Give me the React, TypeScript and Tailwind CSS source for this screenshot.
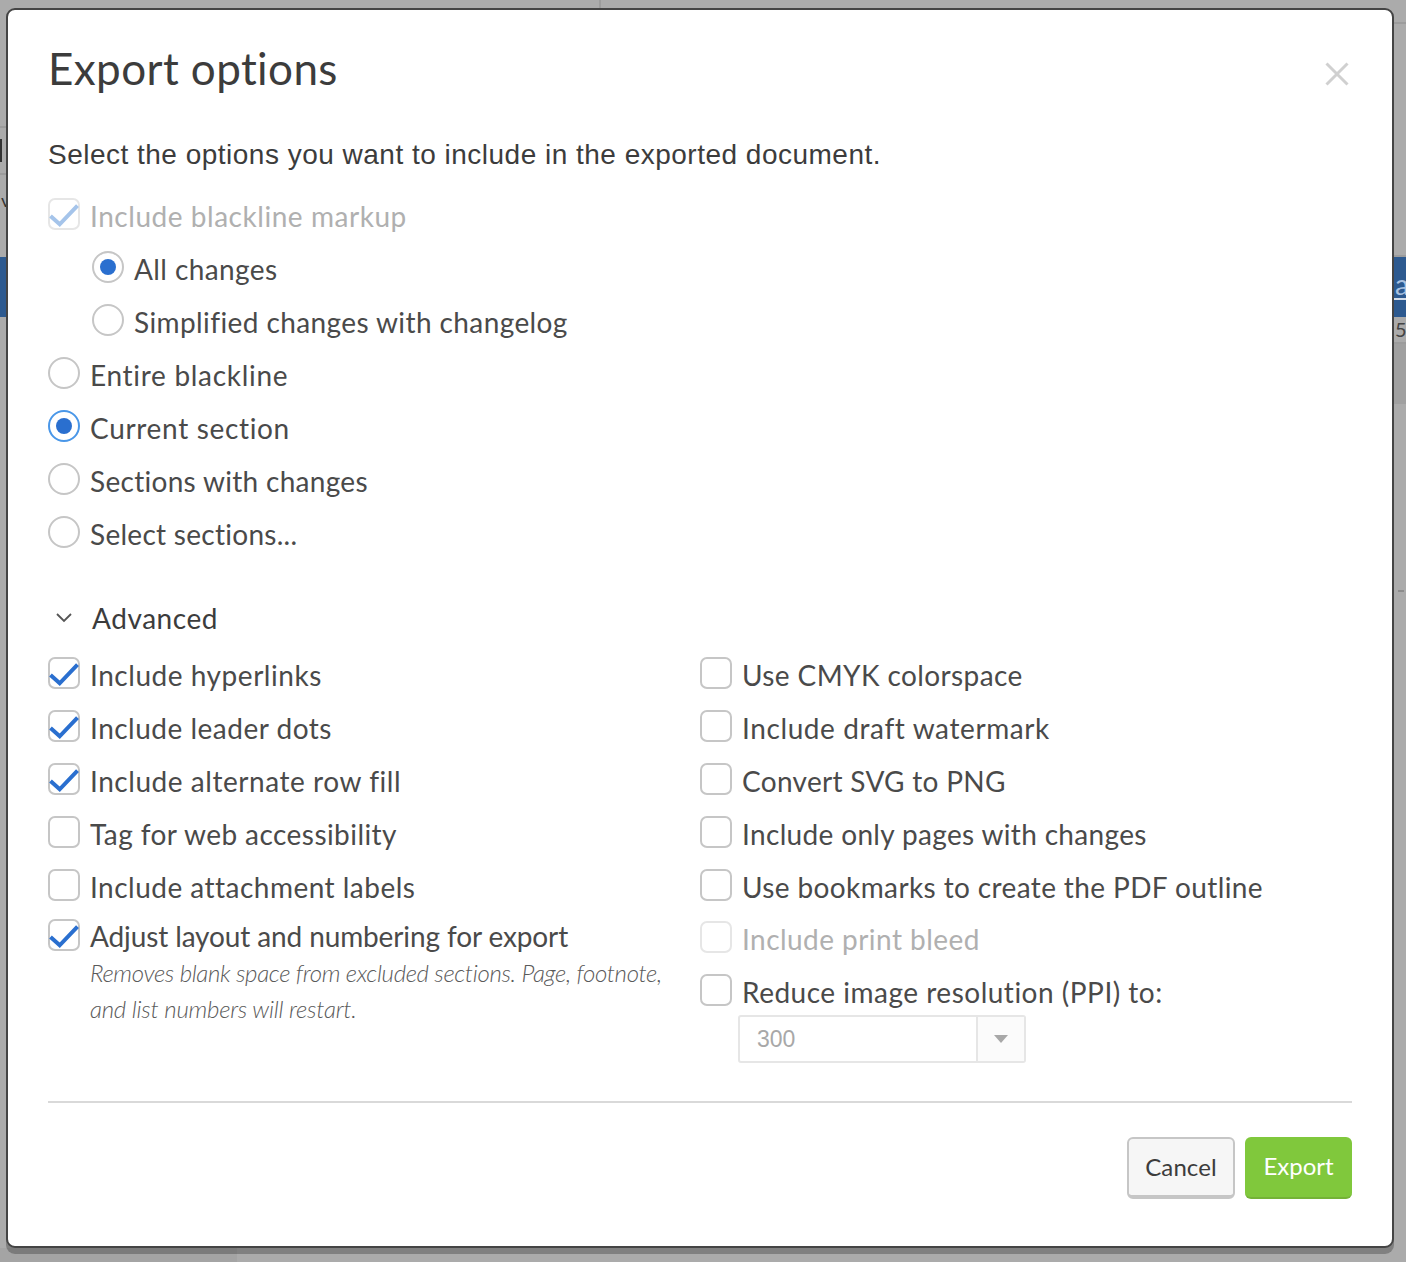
import React from "react";

const lato = "font-['Lato','Noto_Sans',sans-serif]";

function Check({ checked, disabled }: { checked?: boolean; disabled?: boolean }) {
  return (
    <span className={`relative block h-[31.5px] w-[31.5px] shrink-0 rounded-[7px] border-2 bg-white ${disabled ? "border-[#e6e6e6]" : "border-[#c6c6c6]"}`}>
      {checked && (
        <svg viewBox="0 0 32 32" className="absolute left-[-2px] top-[-2px] w-8 h-8" fill="none">
          <path d="M2.5 18 L11.7 26.3 L29.5 7.7" stroke={disabled ? "#a5c4ea" : "#2a6fcf"} strokeWidth="4" />
        </svg>
      )}
    </span>
  );
}

function Radio({ checked, focus }: { checked?: boolean; focus?: boolean }) {
  return (
    <span className={`flex h-[31.5px] w-[31.5px] shrink-0 items-center justify-center rounded-full border-2 bg-white ${focus ? "border-[#4a97e8]" : "border-[#c6c6c6]"}`}>
      {checked && <span className="block h-[15.5px] w-[15.5px] rounded-full bg-[#2a6fcf]" />}
    </span>
  );
}

function Row({ control, label, muted, className = "", track = "tracking-[0.4px]" }: { control: React.ReactNode; label: string; muted?: boolean; className?: string; track?: string }) {
  return (
    <div className={`flex h-[53px] items-start gap-[10.5px] ${className}`}>
      <div className="pt-[2px]">{control}</div>
      <span className={`text-[28px] leading-[40px] whitespace-nowrap ${track} ${muted ? "text-[#b0b0b0]" : "text-[#4a4a4a]"}`}>{label}</span>
    </div>
  );
}

export default function App() {
  return (
    <div className={`relative h-[1262px] w-full overflow-hidden bg-[#ababab] ${lato}`}>
      {/* dimmed page behind */}
      <div className="flex h-full flex-col">
        <div className="h-2 w-[601px] shrink-0 border-r-2 border-[#9c9c9c]" />
        <div className="flex h-[1240px] shrink-0 justify-between">
          <div className="flex w-[6px] flex-col overflow-hidden">
            <div className="h-[120px] border-b-2 border-[#9c9c9c]" />
            <div className="h-[47px] border-b-2 border-[#9c9c9c] pt-[11px]"><div className="h-[23px] w-[2px] bg-[#333]" /></div>
            <div className="h-[82px] pl-[1px] pt-[15px] text-[18px] leading-[20px] text-[#333]">v</div>
            <div className="h-[60px] bg-[#2d5a90]" />
          </div>
          <div className="flex w-[12px] flex-col overflow-hidden">
            <div className="h-[16px] shrink-0 border-b-2 border-[#9c9c9c]" />
            <div className="h-[233px] shrink-0 border-b-2 border-[#9c9c9c]" />
            <div className="h-[60px] shrink-0 bg-[#2d5a90]">
              <div className="h-[43px] border-b-2 border-[#d5deea] pl-[1px] text-[28px] leading-[54px] text-[#a9c2e0]">a</div>
            </div>
            <div className="h-[27px] shrink-0 border-b-2 border-[#9c9c9c] pl-[1px] text-[20px] leading-[24px] text-[#444]">5</div>
            <div className="h-[60px] shrink-0 bg-[#a0a0a0]" />
            <div className="ml-[4px] mt-[186px] h-[2px] w-[6px] shrink-0 bg-[#8c8c8c]" />
          </div>
        </div>
        <div className="flex-1"><div className="h-full w-[237px] bg-[#a4a4a4]" /></div>
      </div>

      {/* modal */}
      <div className="absolute left-[6px] top-2 flex h-[1240px] w-[1388px] flex-col rounded-[9px] border-2 border-[#444] bg-white pl-[40px] pr-[40px] shadow-[0_6px_0_0_rgba(0,0,0,0.25)]">
        <div className="flex items-start justify-between">
          <h1 className="mt-[28px] text-[44px] leading-[60px] tracking-[0.4px] text-[#3c3c3c]">Export options</h1>
          <svg viewBox="0 0 24 24" className="mt-[52px] mr-[3px] w-6 h-6" fill="none" stroke="#d0d0d0" strokeWidth="3">
            <path d="M1.5 1.5 L22.5 22.5 M22.5 1.5 L1.5 22.5" />
          </svg>
        </div>
        <p className="mt-[38px] font-['Liberation_Sans',sans-serif] text-[28px] leading-[38px] tracking-[0.49px] text-[#3c3c3c]">Select the options you want to include in the exported document.</p>

        <div className="mt-[22px] flex flex-col">
          <Row control={<Check checked disabled />} label="Include blackline markup" muted track="tracking-[0.54px]" />
          <Row control={<Radio checked />} label="All changes" className="pl-[44px]" />
          <Row control={<Radio />} label="Simplified changes with changelog" className="pl-[44px]" />
          <Row control={<Radio />} label="Entire blackline" track="tracking-[0.7px]" />
          <Row control={<Radio checked focus />} label="Current section" track="tracking-[0.67px]" />
          <Row control={<Radio />} label="Sections with changes" track="tracking-[0.3px]" />
          <Row control={<Radio />} label="Select sections..." track="tracking-[0.28px]" />
        </div>

        <div className="mt-[29px] flex h-[44px] items-center text-[#3c3c3c]">
          <svg viewBox="0 0 16 10" className="ml-[8px] w-4 h-[10px]" fill="none" stroke="#555" strokeWidth="1.8"><path d="M1 1 L8 8 L15 1" /></svg>
          <span className="ml-[20px] text-[28px] leading-[40px] tracking-[0.56px]">Advanced</span>
        </div>

        <div className="mt-[15px] grid grid-cols-[652px_1fr]">
          <div className="flex flex-col">
            <Row control={<Check checked />} label="Include hyperlinks" track="tracking-[0.54px]" />
            <Row control={<Check checked />} label="Include leader dots" track="tracking-[0.5px]" />
            <Row control={<Check checked />} label="Include alternate row fill" track="tracking-[0.55px]" />
            <Row control={<Check />} label="Tag for web accessibility" track="tracking-[0.44px]" />
            <Row control={<Check />} label="Include attachment labels" track="tracking-[0.48px]" />
            <div className="-mt-[4px] flex gap-[10.5px]">
              <div className="pt-[3px]"><Check checked /></div>
              <div>
                <div className="whitespace-nowrap text-[28px] leading-[40px] tracking-[-0.12px] text-[#4a4a4a]">Adjust layout and numbering for export</div>
                <p className="mt-[-1px] w-[580px] text-[24px] font-light italic leading-[36px] tracking-[-0.25px] text-[#5a5a5a]"><span className="tracking-[-0.34px]">Removes blank space from excluded sections. Page, footnote,</span> and list numbers will restart.</p>
              </div>
            </div>
          </div>
          <div className="flex flex-col">
            <Row control={<Check />} label="Use CMYK colorspace" />
            <Row control={<Check />} label="Include draft watermark" track="tracking-[0.6px]" />
            <Row control={<Check />} label="Convert SVG to PNG" track="tracking-[0.3px]" />
            <Row control={<Check />} label="Include only pages with changes" track="tracking-[0.34px]" />
            <Row control={<Check />} label="Use bookmarks to create the PDF outline" track="tracking-[0.38px]" />
            <Row control={<Check disabled />} label="Include print bleed" muted track="tracking-[0.45px]" className="-mt-[1px]" />
            <Row control={<Check />} label="Reduce image resolution (PPI) to:" track="tracking-[0.5px]" />
            <div className="ml-[38px] -mt-[10px] flex h-[48px] w-[288px] rounded-[3px] border-2 border-[#e6e6e6] bg-white">
              <span className="flex-1 pl-[17px] font-['Liberation_Sans',sans-serif] text-[23px] leading-[44px] text-[#a8a8a8]">300</span>
              <span className="flex w-[48px] items-center justify-center border-l-2 border-[#e6e6e6] bg-[#fbfbfb]">
                <svg viewBox="0 0 14 8" className="w-[14px] h-2" fill="#a8a8a8"><path d="M0 0 H14 L7 8 Z" /></svg>
              </span>
            </div>
          </div>
        </div>

        <div className="mt-[38px] h-[2px] bg-[#d9d9d9]" />

        <div className="mt-[34px] flex justify-end gap-[10px]">
          <button className="h-[62px] w-[108px] rounded-[6px] border-2 border-b-4 border-[#c6c6c6] bg-[#f6f6f6] pb-[1px] text-[24px] tracking-[0.1px] text-[#3c3c3c]">Cancel</button>
          <button className="h-[62px] w-[107px] rounded-[6px] border-b-2 border-[#74b237] bg-[#80c83c] pb-[2px] text-[24px] text-white">Export</button>
        </div>
      </div>
    </div>
  );
}
